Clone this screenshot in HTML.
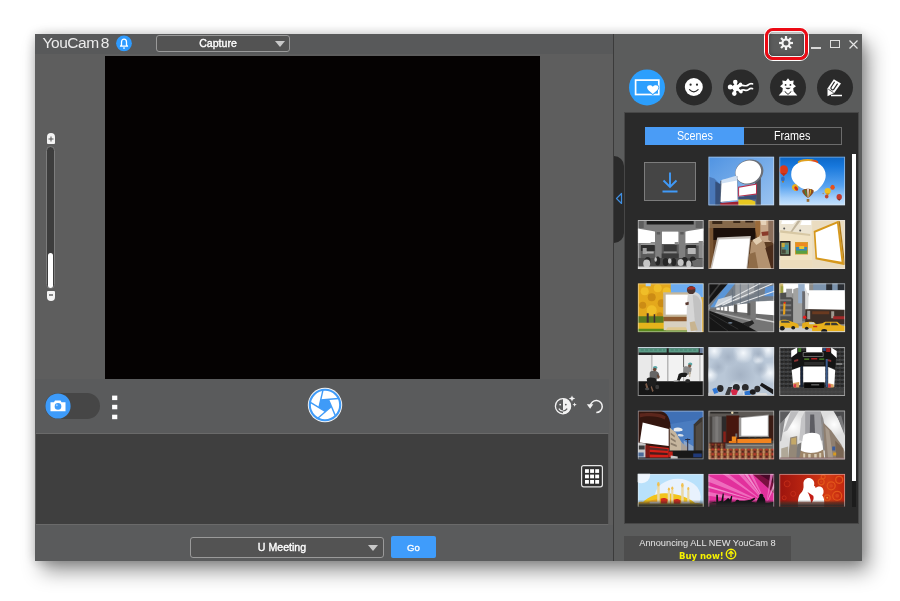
<!DOCTYPE html>
<html>
<head>
<meta charset="utf-8">
<title>YouCam 8</title>
<style>
html,body{margin:0;padding:0;}
body{width:900px;height:601px;background:#fff;position:relative;overflow:hidden;font-family:"Liberation Sans",sans-serif;}
.abs{position:absolute;}
#win{position:absolute;left:35px;top:34px;width:827px;height:527px;background:#5e5e5e;border-radius:2px;
  box-shadow:7px 10px 20px rgba(0,0,0,.42),0 1px 12px rgba(0,0,0,.22);will-change:transform;
  clip-path:none;}
#win>div,#win>svg{position:absolute;}
#titlebar{left:0;top:0;width:578px;height:20px;background:#58595a;}
#title{left:7.500px;top:-1px;font-size:15.5px;color:#ececec;line-height:19px;letter-spacing:-0.45px;word-spacing:-1.800px;white-space:nowrap;}
#video{left:70px;top:22px;width:435px;height:323px;background:#050202;}
.dd{border:1px solid #9a9a9a;border-radius:3px;box-sizing:border-box;color:#fff;font-size:10.600px;-webkit-text-stroke:0.35px #fff;text-align:center;background:#535353;}
#ctrl{left:0;top:345px;width:574px;height:54px;background:#5a5b5c;}
#tray{left:1px;top:399px;width:573px;height:92px;background:#3f3f3f;border-top:1px solid #6a6a6a;border-bottom:1px solid #6a6a6a;border-right:1px solid #585858;box-sizing:border-box;}
#divider{left:578px;top:0;width:1px;height:527px;background:#3b3b3b;}
#right{left:579px;top:0;width:248px;height:527px;background:#5b5c5c;}
#panel{left:589px;top:78px;width:235px;height:412px;background:#2a2a2a;border:1px solid #474747;box-sizing:border-box;}
.th{position:absolute;left:0;top:0;width:66px;height:49px;overflow:hidden;}
.th svg{position:absolute;left:0;top:0;}
.th::after{content:"";position:absolute;left:0;top:0;right:0;bottom:0;border:1px solid rgba(235,235,235,.55);}
.th6::after{border-bottom:none;}
.sx{display:inline-block;transform:scaleX(.86);}
.circ{transform:translateY(0.400px);position:absolute;width:36px;height:36px;border-radius:50%;background:#2a2a2a;top:35px;}
</style>
</head>
<body>
<div id="win">
  <div id="right"></div>
  <div id="titlebar"></div>
  <div id="title">YouCam 8</div>
  <!-- bell -->
  <svg style="left:81px;top:1px;transform:translate(0,-0.200px)" width="17" height="17" viewBox="0 0 17 17">
    <circle cx="8" cy="8.500" r="7.900" fill="#2e9bff"/>
    <path d="M4.500 11.400L5.500 10.200V7.300C5.500 5.400 6.600 4.400 8 4.400C9.400 4.400 10.500 5.400 10.500 7.300V10.200L11.500 11.400Z" fill="none" stroke="#fff" stroke-width="1.300" stroke-linejoin="round"/>
    <rect x="7" y="12.700" width="2" height="1.100" fill="#fff"/>
  </svg>
  <!-- capture dropdown -->
  <div class="dd" style="left:121px;top:1px;width:134px;height:17px;line-height:14px;padding-right:10px;">Capture</div>
  <svg style="left:240px;top:7px" width="10" height="6" viewBox="0 0 10 6"><path d="M0 0H10L5 6Z" fill="#c8c8c8"/></svg>
  <div id="video"></div>
  <!-- zoom slider -->
  <div style="left:12px;top:99px;width:8px;height:11px;background:#f4f4f4;border-radius:4px 4px 1px 1px;"></div>
  <svg style="left:13px;top:102px" width="6" height="6" viewBox="0 0 6 6"><path d="M3 0.5V5.5M0.5 3H5.5" stroke="#555" stroke-width="1"/></svg>
  <div style="left:11px;top:112px;width:9px;height:143px;box-sizing:border-box;border:1px solid #7d7d7d;background:#3d3d3d;border-radius:4.5px;"></div>
  <div style="left:13px;top:219px;width:5px;height:35px;background:#fff;border-radius:2.5px;"></div>
  <div style="left:12px;top:257px;width:8px;height:10px;background:#f4f4f4;border-radius:1px 1px 4px 4px;"></div>
  <div style="left:14px;top:260px;width:4px;height:1.5px;background:#888;"></div>
  <div id="ctrl"></div>
  <!-- camera toggle -->
  <div style="left:10px;top:359px;width:55px;height:26px;border-radius:13px;background:#464646;"></div>
  <svg style="left:10px;top:359px" width="26" height="26" viewBox="0 0 26 26">
    <circle cx="13" cy="13" r="12.6" fill="#3d9bfa"/>
    <path d="M5.5 9.2H9L10 7.6H15.5L16.5 9.2H20.5V18.2H5.5Z" fill="#fff"/>
    <circle cx="13" cy="13.4" r="3.3" fill="#3d9bfa"/>
    <circle cx="11.8" cy="12.3" r="1" fill="#9ccbfb"/>
  </svg>
  <svg style="left:76px;top:360px" width="8" height="28" viewBox="0 0 8 28"><g fill="#fff"><rect x="1.100" y="1.600" width="5.200" height="4.500"/><rect x="1.100" y="10.800" width="5.200" height="4.500"/><rect x="1.100" y="20.700" width="5.200" height="4.500"/></g></svg>
  <!-- shutter -->
  <svg style="left:272px;top:353px" width="36" height="36" viewBox="-18 -18 36 36">
    <circle r="17.2" fill="#f4f4f4"/>
    <circle r="15.2" fill="#fff" stroke="#3f9bf8" stroke-width="2.1"/>
    <g id="shut"><polygon points="6.43,1.48 0.58,6.57 -6.08,2.58 -4.33,-4.98 3.40,-5.66" fill="#3f9bf8"/><path d="M6.43 1.48L-6.91 13.09" stroke="#3f9bf8" stroke-width="1.4"/><path d="M0.58 6.57L-14.58 -2.53" stroke="#3f9bf8" stroke-width="1.4"/><path d="M-6.08 2.58L-2.10 -14.65" stroke="#3f9bf8" stroke-width="1.4"/><path d="M-4.33 -4.98L13.29 -6.52" stroke="#3f9bf8" stroke-width="1.4"/><path d="M3.40 -5.66L10.31 10.62" stroke="#3f9bf8" stroke-width="1.4"/></g>
  </svg>
  <!-- face beautify -->
  <svg style="left:518px;top:360px" width="26" height="24" viewBox="0 0 26 24">
    <circle cx="10" cy="12.2" r="7.6" fill="none" stroke="#f2f2f2" stroke-width="1.3"/>
    <path d="M10 4.4A7.8 7.8 0 0 1 10 20Z" fill="#f2f2f2"/>
    <circle cx="7.2" cy="10.6" r="0.9" fill="#f2f2f2"/>
    <circle cx="12.8" cy="10.6" r="0.9" fill="#5a5b5c"/>
    <path d="M5.8 14.6Q7.5 17 10 17" fill="none" stroke="#f2f2f2" stroke-width="1.1"/>
    <path d="M10 17Q12.6 17 14.2 14.6" fill="none" stroke="#5a5b5c" stroke-width="1.1"/>
    <path d="M19 1.4L19.9 3.6L22.2 4.5L19.9 5.4L19 7.6L18.1 5.4L15.8 4.500L18.1 3.6Z" fill="#f2f2f2"/>
    <path d="M21.6 8.6L22.2 10.100L23.800 10.700L22.2 11.3L21.6 12.8L21 11.3L19.4 10.700L21 10.100Z" fill="#f2f2f2"/>
  </svg>
  <!-- undo -->
  <svg style="left:550px;top:363px" width="20" height="18" viewBox="0 0 20 18">
    <path d="M5.3 8.900A6 6 0 1 1 11.3 15.600" fill="none" stroke="#f2f2f2" stroke-width="1.5"/>
    <path d="M1.800 7.200L8.300 7.200L5.100 11.700Z" fill="#f2f2f2"/>
  </svg>
  <div id="tray"></div>
  <div style="left:0;top:491px;width:578px;height:36px;background:#5a5b5c;"></div>
  <!-- grid icon -->
  <svg style="left:546px;top:431px" width="22" height="23" viewBox="0 0 22 23">
    <rect x="0.600" y="0.600" width="20.800" height="21.200" rx="2" fill="#303030" stroke="#e4e4e4" stroke-width="1.200"/>
    <g fill="#fff"><rect x="4" y="4.200" width="3.900" height="3.700"/><rect x="9.100" y="4.200" width="3.900" height="3.700"/><rect x="14.200" y="4.200" width="3.900" height="3.700"/>
    <rect x="4" y="9.600" width="3.900" height="3.700"/><rect x="9.100" y="9.600" width="3.900" height="3.700"/><rect x="14.200" y="9.600" width="3.900" height="3.700"/>
    <rect x="4" y="15" width="3.900" height="3.700"/><rect x="9.100" y="15" width="3.900" height="3.700"/><rect x="14.200" y="15" width="3.900" height="3.700"/></g>
  </svg>
  <!-- bottom bar -->
  <div class="dd" style="left:155px;top:503px;width:194px;height:21px;line-height:19.500px;padding-right:10px;">U Meeting</div>
  <svg style="left:333px;top:511px" width="10" height="6" viewBox="0 0 10 6"><path d="M0 0H10L5 6Z" fill="#c8c8c8"/></svg>
  <div style="left:356px;top:502px;width:45px;height:22px;background:#3f9cfb;border-radius:2px;color:#fff;font-size:9.600px;-webkit-text-stroke:0.300px #fff;text-align:center;line-height:24px;">Go</div>
  <div id="divider"></div>
  <!-- collapse handle -->
  <div style="left:579px;top:122px;width:10px;height:87px;background:#2a2a2a;border-radius:0 10px 10px 0;"></div>
  <svg style="left:580px;top:158px" width="8" height="13" viewBox="0 0 8 13"><path d="M6.500 1.500V11.500L1.500 6.500Z" fill="none" stroke="#3f8ee0" stroke-width="1.2" stroke-linejoin="round"/></svg>
  <!-- gear -->
  <svg style="left:743px;top:1px" width="16" height="16" viewBox="-8 -8 16 16">
    <g stroke="#f2f2f2" stroke-width="2.2">
      <path d="M0 -7V7"/><path d="M-7 0H7"/><path d="M-4.950 -4.950L4.950 4.950"/><path d="M-4.950 4.950L4.950 -4.950"/>
    </g>
    <circle r="4.600" fill="#f2f2f2"/>
    <circle r="2.500" fill="#555657"/>
  </svg>
  <!-- window buttons -->
  <div style="left:776px;top:13px;width:10px;height:1.5px;background:#d8d8d8;"></div>
  <div style="left:795px;top:6px;width:10px;height:8px;box-sizing:border-box;border:1.3px solid #e0e0e0;"></div>
  <svg style="left:814px;top:6px" width="9" height="9" viewBox="0 0 9 9"><path d="M0.500 0.500L8.500 8.500M8.500 0.500L0.500 8.500" stroke="#e6e6e6" stroke-width="1.2"/></svg>
  <!-- mode circles -->
  <div class="circ" style="left:594px;background:#2c9ffd;"></div>
  <div class="circ" style="left:641px;"></div>
  <div class="circ" style="left:688px;"></div>
  <div class="circ" style="left:735px;"></div>
  <div class="circ" style="left:782px;"></div>
  <svg id="icons" style="left:594px;top:35px;transform:translateY(0.400px)" width="225" height="36" viewBox="0 0 225 36">
    <!-- scenes icon -->
    <rect x="6.600" y="10.700" width="23.200" height="14.400" fill="none" stroke="#fff" stroke-width="1.700"/>
    <path d="M23.800 24.700C20.500 21.900 18.100 20.300 18.100 18.200C18.100 15.500 21.800 14.900 23.800 17.300C25.800 14.900 29.500 15.500 29.500 18.200C29.500 20.300 27.100 21.900 23.800 24.700Z" fill="#fff" stroke="#2c9ffd" stroke-width="1.500" paint-order="stroke"/>
    <!-- smiley -->
    <circle cx="64.800" cy="17.600" r="9" fill="#fff"/>
    <circle cx="61.600" cy="15.300" r="1.100" fill="#2a2a2a"/><circle cx="68" cy="15.300" r="1.100" fill="#2a2a2a"/>
    <path d="M60.500 20.200Q64.800 24.600 69.100 20.200" fill="none" stroke="#2a2a2a" stroke-width="1.200" stroke-linecap="round"/>
    <!-- splash -->
    <g fill="#fff"><circle cx="106.800" cy="18.300" r="3.300"/><circle cx="106.300" cy="12.700" r="2.300"/><circle cx="101.300" cy="17.700" r="2.500"/><circle cx="105.300" cy="24.200" r="2.300"/><circle cx="112" cy="22.300" r="1.800"/><circle cx="111.500" cy="14.800" r="1.700"/>
    <path d="M106.300 12.700L106.800 18.300L101.300 17.700M105.300 24.200L106.800 18.300L112 22.300M106.800 18.300L111.500 14.800" stroke="#fff" stroke-width="2.600" fill="none"/></g>
    <path d="M110.500 17.200C113.500 14 116 18 119 15.600S122.500 14.600 123.500 14.400" fill="none" stroke="#fff" stroke-width="1.700" stroke-linecap="round"/>
    <path d="M111.500 21.600C114.500 18.600 116.500 22.600 119.500 20.200S122.500 19.400 123.500 19.200" fill="none" stroke="#fff" stroke-width="1.700" stroke-linecap="round"/>
    <!-- avatar -->
    <polygon points="159.0,8.8 161.1,11.6 164.7,11.1 164.2,14.7 167.0,16.8 164.2,18.9 164.7,22.5 161.1,22.0 159.0,24.8 156.9,22.0 153.3,22.5 153.8,18.9 151.0,16.8 153.8,14.7 153.3,11.1 156.9,11.6" fill="#fff"/>
    <path d="M153.300 22.200H164.700L168.300 26.200H149.700Z" fill="#fff"/>
    <path d="M155.800 22.200L159 25L162.200 22.200" fill="none" stroke="#2a2a2a" stroke-width="1"/>
    <circle cx="156.600" cy="15.500" r="0.900" fill="#2a2a2a"/><circle cx="161.400" cy="15.500" r="0.900" fill="#2a2a2a"/>
    <path d="M156.300 18.300Q159 21.300 161.700 18.300Z" fill="#2a2a2a"/>
    <!-- pencil -->
    <path d="M204.800 9.900L212 14L205.200 23.700L198.500 26.900L198.500 19.200Z" fill="#fff"/>
    <path d="M205.600 12.400L202 18C201.400 19.600 203.200 21 204.600 20.200L208.600 14.300" fill="none" stroke="#2a2a2a" stroke-width="1.200"/>
    <path d="M199.300 19.800L204.600 23.300" stroke="#2a2a2a" stroke-width="0.800"/>
    <path d="M202 26.100H213" stroke="#fff" stroke-width="1.600"/>
  </svg>
  <div id="panel"></div>
  <!-- tabs -->
  <div style="left:610px;top:93px;width:99px;height:18px;background:#4a9cf6;color:#fff;font-size:12.500px;line-height:19px;text-align:center;"><span class="sx">Scenes</span></div>
  <div style="left:709px;top:93px;width:98px;height:18px;box-sizing:border-box;border:1px solid #6c6c6c;border-left:none;color:#fff;font-size:12.500px;line-height:17px;text-align:center;"><span class="sx">Frames</span></div>
  <!-- download tile -->
  <div style="left:609px;top:128px;width:52px;height:39px;box-sizing:border-box;border:1px solid #7c7c7c;background:#454545;"></div>
  <svg style="left:624px;top:137px" width="22" height="22" viewBox="0 0 22 22"><path d="M11 1.500V15.500M4.500 9.500L11 16L17.500 9.500M3.500 20.500H18.500" fill="none" stroke="#409af8" stroke-width="1.900"/></svg>
  <svg id="thumbs" style="left:0;top:0" width="0" height="0"><defs><linearGradient id="fade6" x1="0" y1="0" x2="0" y2="1"><stop offset="0" stop-color="#2a2a2a" stop-opacity="0"/><stop offset="0.800" stop-color="#2a2a2a" stop-opacity="1"/><stop offset="1" stop-color="#2a2a2a" stop-opacity="1"/></linearGradient></defs></svg>
<!--THUMBS-->
<div class="th" style="transform:translate(673.3px,122.5px);height:49px;"><svg width="66" height="49" viewBox="0 0 66 49"><defs><linearGradient id="g12" x1="0" y1="0" x2="1" y2="1"><stop offset="0" stop-color="#4f93e2"/><stop offset="1" stop-color="#9cc4f0"/></linearGradient></defs>
<rect width="66" height="49" fill="url(#g12)"/>
<path d="M0 20L6 22L10 26V49H0Z" fill="#4a78b8"/>
<path d="M7 25L13 28V49H7Z" fill="#35507c"/>
<path d="M47 14H52.5V49H46Z" fill="#4a4e58"/>
<path d="M36 30H48V49H36Z" fill="#5d6f8c"/>
<ellipse cx="41" cy="15.5" rx="14.3" ry="12.3" fill="#6c7078" transform="rotate(-20 41 15.5)"/>
<ellipse cx="40" cy="15.5" rx="13" ry="11.3" fill="#fff" transform="rotate(-20 40 15.5)"/>
<path d="M12 24.5L29 19.5L29.5 43L11.5 46Z" fill="#50607a"/>
<path d="M13.3 23.5L28.8 21.5L29.3 43.5L12.3 45.5Z" fill="#fff"/>
<path d="M13.5 23.4L28.5 19L28.8 24L13.4 27Z" fill="#cfe0f4"/>
<path d="M29.8 30.2L48.7 27V38L29.8 40.3Z" fill="#b8304c"/>
<path d="M30.8 31.2L47.7 28.3V37L30.8 39.2Z" fill="#fff"/>
<path d="M30 43L38 41.5L47 45V49H30Z" fill="#e8c820"/>
<path d="M12 46.5L30 45V49H12Z" fill="#a02030"/>
<path d="M30 40.5L48 38.5V43L30 43Z" fill="#3c5078"/></svg></div>
<div class="th" style="transform:translate(744.2px,122.5px);height:49px;"><svg width="66" height="49" viewBox="0 0 66 49"><defs><linearGradient id="g13" x1="0" y1="0" x2="0" y2="1"><stop offset="0" stop-color="#0b66c6"/><stop offset="0.2" stop-color="#1878dc"/><stop offset="0.6" stop-color="#56a2f0"/><stop offset="0.85" stop-color="#a6d0fa"/><stop offset="1" stop-color="#c6e2fc"/></linearGradient></defs>
<rect width="66" height="49" fill="url(#g13)"/>
<ellipse cx="28.5" cy="5.5" rx="10" ry="3" fill="#e0a020"/>
<ellipse cx="35" cy="6" rx="4" ry="2.5" fill="#e04818"/>
<path d="M12 18C12 9 19 4.5 29 4.5C39 4.5 46.5 10 46.5 19C46.5 25 42 30 38.5 33.5C36 36 33 35.5 29 34C24 32.5 12 28 12 18Z" fill="#fff"/>
<ellipse cx="4.5" cy="13.5" rx="4.3" ry="4.8" fill="#d83a1c"/><path d="M1.8 16.5L4.5 20L7.2 16.5Z" fill="#c03018"/>
<ellipse cx="3.7" cy="22.5" rx="1.9" ry="2.2" fill="#2f6cc0"/><rect x="3" y="24.5" width="1.6" height="1.5" fill="#b07820"/>
<ellipse cx="16" cy="31" rx="3" ry="3.4" fill="#e8b020" transform="rotate(-35 16 31)"/><ellipse cx="17" cy="32" rx="1.5" ry="2.5" fill="#d03018" transform="rotate(-35 17 32)"/>
<path d="M23 34.5C23 31.5 34.5 31.5 34.5 34.5C34.5 37 30.5 40.5 28.8 41.5C27 40.5 23 37 23 34.5Z" fill="#8a4a20"/>
<path d="M25.5 33C27 32.5 27.5 38 28.3 41C27 39 25 36 25.5 33Z" fill="#3c8a3c"/><path d="M28 32.5H29.6L29.2 41H28.5Z" fill="#f0f0f0"/><path d="M31 32.8C33 33 31.5 38 29.5 41C30.5 38 30.5 35 31 32.8Z" fill="#d8b020"/>
<rect x="27.5" y="42.5" width="2.6" height="2.8" fill="#9a6a30"/>
<ellipse cx="48.5" cy="34.5" rx="3.1" ry="3" fill="#ecc020"/><path d="M46.5 36.5L48.5 39.5L50.5 36.5Z" fill="#d8a020"/>
<ellipse cx="53.4" cy="30.8" rx="2.2" ry="2.5" fill="#e85018"/>
<ellipse cx="47.5" cy="40" rx="1.8" ry="2" fill="#c04a30"/>
<ellipse cx="60" cy="40.5" rx="2.7" ry="2.9" fill="#c03a30"/><path d="M58.5 42.5L60 44.5L61.5 42.5Z" fill="#803028"/>
<circle cx="44" cy="37" r="0.8" fill="#a89070"/></svg></div>
<div class="th" style="transform:translate(602.7px,186px);height:49px;"><svg width="66" height="49" viewBox="0 0 66 49"><rect width="66" height="49" fill="#5a5a5a"/>
<rect x="0" y="0" width="66" height="11" fill="#7c7c7c"/>
<path d="M9 1H56V4.5H9Z" fill="#1c1c1c"/>
<path d="M0 1H6V8H0Z" fill="#5e5e5e"/><path d="M58 1H66V8H58Z" fill="#606060"/>
<path d="M0 8.5L17.5 11.5V23.5L0 23Z" fill="#fff"/>
<path d="M24 11.5H41V24H24Z" fill="#fff"/>
<path d="M47.5 11.5L66 8.5V22.5L47.5 23.5Z" fill="#fff"/>
<rect x="17.5" y="10.5" width="6.5" height="32" fill="#7f7f7f"/><rect x="41" y="10.5" width="6.5" height="32" fill="#7f7f7f"/>
<rect x="19" y="12" width="3.5" height="2.5" fill="#5c5c5c"/><rect x="42.5" y="12" width="3.5" height="2.5" fill="#5c5c5c"/>
<rect x="13" y="22" width="4.5" height="2.5" fill="#8c8c8c"/><rect x="37" y="22" width="4" height="2.5" fill="#8c8c8c"/>
<rect x="0" y="23.5" width="17.5" height="2" fill="#9a9a9a"/><rect x="47.5" y="23.5" width="18.5" height="2" fill="#8a8a8a"/>
<rect x="3" y="25" width="14" height="6" fill="#2e2e2e"/><rect x="26" y="25" width="13" height="6.5" fill="#3a3a3a"/><rect x="48.5" y="25" width="10" height="4" fill="#2a2a2a"/>
<rect x="26" y="31.5" width="13" height="2" fill="#8a8a8a"/>
<rect x="50" y="28" width="8" height="6" fill="#b8b8b8"/><rect x="5" y="28" width="4" height="6" fill="#a0a0a0"/><rect x="8" y="31.5" width="8" height="2" fill="#b0b0b0"/>
<rect x="61" y="21" width="5" height="20" fill="#8a8a8a"/>
<rect x="0" y="24" width="3" height="20" fill="#787878"/>
<rect x="24" y="33.5" width="17" height="9" fill="#3c3c3c"/>
<path d="M0 38H66V49H0Z" fill="#4a4a4a"/>
<g fill="#262626"><ellipse cx="10" cy="41" rx="3" ry="4"/><ellipse cx="20" cy="41" rx="2.5" ry="4.5"/><ellipse cx="28" cy="42" rx="3" ry="4"/><ellipse cx="36" cy="42" rx="2.5" ry="4"/><ellipse cx="47" cy="41" rx="3" ry="4"/><ellipse cx="55" cy="40" rx="3" ry="3.5"/></g>
<g fill="#c4c4c4"><ellipse cx="9" cy="43.5" rx="3.5" ry="4"/><ellipse cx="43" cy="42.5" rx="3" ry="3.5"/><ellipse cx="51" cy="44" rx="2.5" ry="3.5"/><ellipse cx="60" cy="43" rx="3" ry="3.5"/><ellipse cx="32" cy="41" rx="1.8" ry="2.8"/><ellipse cx="18" cy="39.5" rx="1.2" ry="2.2"/></g>
<path d="M0 46.5H66V49H0Z" fill="#d4d4d4"/>
<path d="M54 41L66 38V47H56Z" fill="#6a6a6a"/></svg></div>
<div class="th" style="transform:translate(673.3px,186px);height:49px;"><svg width="66" height="49" viewBox="0 0 66 49"><rect width="66" height="49" fill="#5c3c22"/>
<rect x="0" y="0" width="48" height="8" fill="#86694a"/>
<rect x="4" y="1" width="10" height="3" fill="#3a2818"/><rect x="25" y="0.5" width="7" height="2.5" fill="#3a2818"/><rect x="37" y="0.5" width="8" height="2" fill="#2a1a10"/>
<path d="M4 8H47V20H4Z" fill="#1c100a"/>
<path d="M0 8H5V49H0Z" fill="#7a5634"/>
<path d="M47 0H66V22H50Z" fill="#c8a88a"/>
<path d="M47 0H52V14L49 20L47 10Z" fill="#9a6a3a"/>
<path d="M52 0H58V5H53Z" fill="#e6d2b8"/>
<path d="M53 12L62 11L63 15L54 16Z" fill="#8a3a2a"/>
<path d="M60 0H66V24L60 20Z" fill="#8a6e5a"/>
<path d="M43 22L50 17L56 22L60 35L64 46V49H40L42 30Z" fill="#b39270"/>
<path d="M44 20L51 16.5L54 21L48 25Z" fill="#e2cdb0"/>
<path d="M57 28L66 24V49H63Z" fill="#4a2c1a"/>
<path d="M41 34L47 32L50 49H40Z" fill="#8f6c48"/>
<path d="M9 17.5L42.5 16L39 49H2Z" fill="#c8c2bc"/>
<path d="M10.5 19.5L41.5 18.5L38 49H3.5Z" fill="#fff"/></svg></div>
<div class="th" style="transform:translate(744.2px,186px);height:49px;"><svg width="66" height="49" viewBox="0 0 66 49"><rect width="66" height="49" fill="#f1e3c4"/>
<path d="M0 0H33V10L30 16L0 12Z" fill="#ece4d2"/>
<path d="M3 0H18L14 4H2Z" fill="#fff"/><path d="M23 0H32V5H21Z" fill="#fff"/>
<path d="M19 0H22L13 12H11Z" fill="#c0b49c"/>
<path d="M0 10L31 14V16L0 12.5Z" fill="#d8c8a4"/>
<path d="M33 0H66V49H33Z" fill="#eadcc0"/>
<path d="M0 40H33V49H0Z" fill="#ecdcbc"/>
<circle cx="5" cy="8.5" r="1" fill="#555"/><circle cx="21" cy="10.5" r="1" fill="#555"/>
<rect x="0.5" y="21" width="10.8" height="14.8" fill="#2a2018"/>
<rect x="2" y="22.5" width="7.8" height="11.8" fill="#6a8a70"/><rect x="5" y="25" width="4" height="5" fill="#3a90a8"/><rect x="2.5" y="23" width="3" height="4" fill="#c8a838"/><rect x="2.5" y="29.5" width="4" height="4" fill="#4a4a3a"/>
<rect x="15.8" y="22" width="13" height="12.5" fill="#d8a030"/>
<rect x="16.6" y="22.8" width="11.4" height="4.5" fill="#ec8a20"/><rect x="16.6" y="27" width="11.4" height="4" fill="#3a8ab8"/><rect x="16.6" y="30.5" width="11.4" height="3.3" fill="#5aa040"/><rect x="20" y="26" width="5" height="3" fill="#e8c830"/>
<path d="M34.5 11L59.3 0.8L64.8 45L36.3 39.3Z" fill="#d6981c"/>
<path d="M36.3 12.4L57.8 3.5L62.3 41.8L37.8 37.6Z" fill="#fff"/>
<path d="M59.3 0.8L60.8 1.5L66 44.5L64.8 45Z" fill="#b07a14"/></svg></div>
<div class="th" style="transform:translate(602.7px,249.3px);height:49px;"><svg width="66" height="49" viewBox="0 0 66 49"><rect width="66" height="49" fill="#e4a81c"/>
<path d="M33 0H66V14H33Z" fill="#6cacf0"/>
<path d="M8 0H13V3H8Z" fill="#a8d0f4"/>
<g fill="#f0be28"><circle cx="7" cy="8" r="4"/><circle cx="20" cy="5" r="4"/><circle cx="14" cy="27" r="5"/><circle cx="29" cy="8" r="4"/></g>
<g fill="#cc8c14"><circle cx="14" cy="14" r="4"/><circle cx="24" cy="20" r="4"/><circle cx="5" cy="22" r="3.5"/><circle cx="22" cy="32" r="3"/></g>
<path d="M0 33H26V40H0Z" fill="#5a7a20"/>
<path d="M9 30H11V40H9ZM16 31H17.5V40H16Z" fill="#3c2c34"/>
<path d="M0 39.5H28V46H0Z" fill="#e4b41c"/>
<path d="M0 45.5H50V49H0Z" fill="#5c8a1c"/>
<path d="M26 33H50V39H26Z" fill="#8c5a30"/>
<path d="M26 38H50V47H26Z" fill="#d8d0c0"/>
<path d="M30 44L48 44L50 47L28 47Z" fill="#e0c890"/>
<rect x="25.5" y="9" width="26" height="24.5" fill="#c4b69c"/>
<rect x="28" y="11.3" width="22.5" height="20" fill="#fff"/>
<path d="M50 12C51 9 55 8 58 9C62 10 64.5 14 64.5 20V49H49.5C48.5 40 49 20 50 12Z" fill="#d6d6d6"/>
<path d="M55 12C58 11 63 14 63.5 22V49H58Z" fill="#c2c2c2"/>
<ellipse cx="53.5" cy="6.8" rx="4.3" ry="4" fill="#4a3430"/>
<path d="M49.2 6C50 2.5 57 2 57.8 5.5L54 6.5Z" fill="#a03028"/>
<path d="M47.5 19.5L51 18.5L51 21.5L48 22Z" fill="#5a3a30"/>
<path d="M52 39L57 38L60 47L53 48Z" fill="#c8b490"/></svg></div>
<div class="th" style="transform:translate(673.3px,249.3px);height:49px;"><svg width="66" height="49" viewBox="0 0 66 49"><rect width="66" height="49" fill="#8c9298"/>
<path d="M20 0L66 0V16L30 22L2 26L0 22Z" fill="#757d86"/>
<path d="M19 0H27L8 24H2Z" fill="#5a96d8"/>
<path d="M57 4L66 2V13L56 13Z" fill="#5c92d2"/>
<path d="M27 0H46V10L27 18Z" fill="#9a9ea2"/>
<path d="M10 16L24 12L24 18L6 24Z" fill="#c8d0d8"/>
<g stroke="#e8eaec" stroke-width="1.1" fill="none"><path d="M14 22L64 0.5"/><path d="M20 24L66 8"/><path d="M28 25L66 18"/><path d="M8 23L52 0"/></g>
<g stroke="#5c6a78" stroke-width="0.6" fill="none"><path d="M32 0V22"/><path d="M40 0V21"/><path d="M50 0V19"/><path d="M24 6V23"/></g>
<path d="M0 0H20L0 22Z" fill="#151515"/>
<path d="M11 0H13L0 17V14Z" fill="#3c3c3c"/>
<path d="M0 26L66 17V49H0Z" fill="#6e6e6e"/>
<path d="M42 18H47.5V39H42Z" fill="#7a7a7a"/><path d="M25.5 21H29V30H25.5Z" fill="#5c5c5c"/><path d="M39 20H42V32H39Z" fill="#565656"/>
<path d="M47.5 18.3L66 17.5V32L47.5 30.5Z" fill="#fff"/>
<path d="M29 21.2L39 20.3V29.8L29 28.8Z" fill="#fff"/>
<path d="M20.5 22.8L25.5 22.4V28.6L20.5 28Z" fill="#fff"/>
<path d="M16 23.5L19 23.3V27.8L16 27.4Z" fill="#fff"/>
<path d="M12.5 24L15 23.8V27.2L12.5 26.9Z" fill="#fff"/>
<path d="M8 24.5L11.5 24.3V26.7L8 26.5Z" fill="#f4f4f4"/>
<path d="M3 26.5L44 35L66 38.5V49H46L2 28.5Z" fill="#757575"/>
<path d="M8 28.5L43 36.5L42 38L6 29Z" fill="#a8a8a8"/>
<path d="M47 36L66 39.5V38L48 34.5Z" fill="#cfcfcf"/>
<path d="M0 27L34 40L50 49H0Z" fill="#161616"/>
<path d="M34 40L44 37L46 40L40 44Z" fill="#252525"/>
<path d="M2 30L30 46" stroke="#3c3c3c" stroke-width="0.7"/><path d="M1 34L20 48" stroke="#383838" stroke-width="0.7"/>
<ellipse cx="22" cy="39.5" rx="2.2" ry="0.9" fill="#6a7a8c"/></svg></div>
<div class="th" style="transform:translate(744.2px,249.3px);height:49px;"><svg width="66" height="49" viewBox="0 0 66 49"><rect width="66" height="49" fill="#8c8c8a"/>
<path d="M2 0H30V10H2Z" fill="#fff"/>
<path d="M0 0H4V12H0Z" fill="#c8b060"/><path d="M1.5 3H4V10H1.5Z" fill="#9aa040"/>
<path d="M0 10L8 9L14 16V40H0Z" fill="#4e4e4e"/>
<path d="M1 16H12V18H1ZM1 21H12V23H1ZM1 26H12V28H1ZM1 31H12V33H1Z" fill="#7a7a7a"/>
<path d="M7 5.5H13V14H7Z" fill="#9a9a9a"/>
<path d="M14 6L18 4.5L23 6V40H14Z" fill="#a2a2a0"/>
<path d="M19 0H25.5V20H19Z" fill="#98b0cc"/>
<path d="M23 8H26V38H23Z" fill="#6c6c70"/>
<path d="M26 4L30 14V30H26Z" fill="#dcdcdc"/>
<path d="M4.3 19.5L6.3 19L6 31L3.8 31.5Z" fill="#e8a018"/><circle cx="5.5" cy="19.5" r="1" fill="#e02020"/>
<path d="M34 0H66V7.5H34Z" fill="#7c94ae"/><path d="M47 0H53V7H47ZM58.5 0H66V7H58.5Z" fill="#2a2e34"/>
<path d="M26 26H66V41H26Z" fill="#3c2e26"/>
<path d="M28 27.5H31V36H28Z" fill="#9a9a96"/><path d="M33 28H50V31H33Z" fill="#6a3a20"/><path d="M52 28H55V35H52Z" fill="#a09a90"/><path d="M54 33H66V36H54Z" fill="#a02828"/>
<path d="M29.5 7L65.5 7L66 26.5L29 25.8Z" fill="#fff"/>
<circle cx="25.5" cy="34" r="1.7" fill="#e61c1c"/>
<path d="M0 43H66V49H0Z" fill="#cacaca"/>
<path d="M0 38C1 36 8 36 10 37.5L17 40C19 40.5 20 42 19.5 44.5H0Z" fill="#e6ae1c"/>
<path d="M2 37.5H9L11 39.5H2Z" fill="#4a4a40"/>
<ellipse cx="3" cy="45" rx="2.5" ry="2.2" fill="#1c1c1c"/><ellipse cx="14" cy="44.5" rx="2" ry="1.8" fill="#1c1c1c"/>
<path d="M23 40.5C24 38.5 33 38 35 39L38 42V45H23Z" fill="#e4ac1c"/><path d="M30 39H34.5L36 41H30Z" fill="#c8d4dc"/>
<ellipse cx="27.5" cy="45" rx="1.8" ry="1.5" fill="#1c1c1c"/>
<path d="M32.5 44C33 41 40 40.5 43 40L46 38.5H58L62 42L66 43V48H33Z" fill="#e8b01c"/>
<path d="M46.5 39.5H51V42H45ZM52 39.5H57L59.5 42H52Z" fill="#3a3a34"/>
<ellipse cx="45" cy="48" rx="3" ry="2.2" fill="#1a1a1a"/>
<path d="M34 42.5H38V44H34Z" fill="#c82a1c"/></svg></div>
<div class="th" style="transform:translate(602.7px,313px);height:49px;"><svg width="66" height="49" viewBox="0 0 66 49"><rect width="66" height="49" fill="#f2f2f2"/>
<rect x="0" y="0" width="66" height="8" fill="#242424"/>
<rect x="0" y="0" width="66" height="1.2" fill="#9ab4c8"/>
<rect x="1" y="1.2" width="28" height="4.3" fill="#5c9c88"/><rect x="31" y="1.2" width="30" height="4.3" fill="#5c9c88"/>
<path d="M3 3H27M33 3H59" stroke="#3e7a68" stroke-width="1.2" stroke-dasharray="3 1.5"/>
<rect x="62" y="1" width="4" height="5" fill="#6a80a0"/>
<g fill="#a8a8a8"><rect x="13.5" y="8" width="1.2" height="27"/><rect x="29.5" y="8" width="1.2" height="27"/><rect x="45.5" y="8" width="1.2" height="27"/><rect x="61.5" y="8" width="1.2" height="27"/></g>
<rect x="0" y="8" width="13.5" height="27" fill="#e9e9e9"/><rect x="46.7" y="8" width="15" height="27" fill="#ececec"/>
<rect x="0" y="34.5" width="66" height="14.5" fill="#161616"/>
<rect x="0" y="34" width="66" height="1" fill="#4a4a4a"/>
<!-- left climber -->
<path d="M12 26C12 23 19 23 21 26L22 30L18 33L12 32Z" fill="#666"/>
<path d="M9 32C10 30 18 30 19 33L18 39L14 40L10 38Z" fill="#1e1e1e"/>
<ellipse cx="17.5" cy="20.5" rx="2.3" ry="1.6" fill="#5aa8a8"/><ellipse cx="17" cy="22.5" rx="1.8" ry="1.8" fill="#6a4a3a"/>
<path d="M9 36L11 42L9 43L7.5 37ZM14 39L16 44L14.5 45L13 40Z" fill="#7a5a48"/>
<ellipse cx="9.5" cy="42" rx="2.2" ry="1.2" fill="#4a4a4a"/><ellipse cx="19.5" cy="40" rx="2" ry="2.2" fill="#3a3a3a"/>
<path d="M20 27L22 30L21 32L19 29Z" fill="#6a4a3a"/>
<!-- right climber -->
<path d="M46 20C47 18.5 53 19.5 54 21.5L53 27L48 28L45.5 25Z" fill="#8a8a8a"/>
<path d="M41 27C43 25.5 49 25 50 27L48 30L44 30L41 35L39 34Z" fill="#1c1c1c"/>
<ellipse cx="52.5" cy="17" rx="2.2" ry="1.5" fill="#5aa8a8"/><ellipse cx="52" cy="18.8" rx="1.7" ry="1.6" fill="#7a5a48"/>
<path d="M53 25L52.5 30L51.5 30L51.5 25Z" fill="#c8b8a0"/>
<path d="M36 33.5L41 33L41 34.5L36 34.5Z" fill="#b0b0b0"/>
<rect x="45.5" y="8" width="0.8" height="12" fill="#555"/>
<ellipse cx="50" cy="34" rx="2.5" ry="2" fill="#2a2a2a"/></svg></div>
<div class="th" style="transform:translate(673.3px,313px);height:49px;"><svg width="66" height="49" viewBox="0 0 66 49"><rect width="66" height="49" fill="#b9c7d7"/>
<defs><radialGradient id="w42"><stop offset="0" stop-color="#f4f8fc"/><stop offset="1" stop-color="#f4f8fc" stop-opacity="0"/></radialGradient>
<radialGradient id="d42"><stop offset="0" stop-color="#a4b2c4"/><stop offset="1" stop-color="#a4b2c4" stop-opacity="0"/></radialGradient></defs>
<circle cx="6" cy="4" r="9" fill="url(#w42)"/><circle cx="35" cy="6" r="11" fill="url(#w42)"/><circle cx="60" cy="3" r="9" fill="url(#w42)"/><circle cx="62" cy="26" r="11" fill="url(#w42)"/><circle cx="2" cy="28" r="8" fill="url(#w42)"/><circle cx="29" cy="40" r="8" fill="url(#w42)"/><circle cx="50" cy="12" r="6" fill="url(#w42)"/>
<circle cx="20" cy="10" r="10" fill="url(#d42)"/><circle cx="50" cy="7" r="8" fill="url(#d42)"/><circle cx="32" cy="28" r="16" fill="url(#d42)"/><circle cx="10" cy="20" r="8" fill="url(#d42)"/><circle cx="52" cy="22" r="8" fill="url(#d42)"/>
<path d="M0 46L8 43L9 46L0 49Z" fill="#c8c8c8"/>
<ellipse cx="12" cy="41.5" rx="3.2" ry="3.4" fill="#2a2a2c"/>
<path d="M4 42L8 40.5L10 45.5L6 47Z" fill="#2f78d8"/>
<path d="M17 47L20 40L24 40L21 49H17Z" fill="#3a3a3c"/>
<ellipse cx="28" cy="40.5" rx="3.5" ry="3.6" fill="#262628"/>
<path d="M22.5 44C23 41.5 29 41.5 29.5 44.5L28 48H24Z" fill="#d42848"/>
<ellipse cx="37" cy="40.5" rx="3.4" ry="3.6" fill="#2a2a2c"/>
<path d="M35 43.5H40L41 48H35Z" fill="#e4e4e4"/>
<path d="M36 44.5L41.5 43.5L42.5 48.5H36.5Z" fill="#2c74d0"/>
<ellipse cx="44.5" cy="45" rx="3" ry="2.8" fill="#1c1c1e"/>
<ellipse cx="49" cy="42" rx="3" ry="3.2" fill="#2e2e30"/>
<path d="M48 46H58L60 49H48Z" fill="#d8d8d8"/>
<path d="M51.5 38.5L53.5 35.8L65 42.5V47.5Z" fill="#19191b"/>
<path d="M0 48H66V49H0Z" fill="#8a8a8a"/></svg></div>
<div class="th" style="transform:translate(744.2px,313px);height:49px;"><svg width="66" height="49" viewBox="0 0 66 49"><rect width="66" height="49" fill="#2e2e2e"/>
<defs><pattern id="n43" width="4" height="4" patternUnits="userSpaceOnUse"><rect width="4" height="4" fill="#303030"/><rect x="0" y="0" width="1.5" height="1.5" fill="#4e4e4e"/><rect x="2" y="2" width="1.5" height="1.5" fill="#1e1e1e"/><rect x="2.5" y="0.5" width="1" height="1" fill="#5a6470"/></pattern></defs>
<rect width="66" height="49" fill="url(#n43)"/>
<path d="M12 9L19 4H51L57 9L56 22L50 20H20L13 23Z" fill="#141414"/>
<path d="M27 0H43V5H27Z" fill="#fff"/>
<path d="M12 3.5L18 0.5V6L12 10.5Z" fill="#fff"/>
<path d="M52 0.5L57.5 4V11L52 6Z" fill="#fff"/>
<path d="M19 1H22V5H19Z" fill="#3c7a28"/><path d="M47 1H51V5H47Z" fill="#a02020"/><path d="M44 1H46.5V4H44Z" fill="#2a4a8a"/>
<path d="M24 5.5H44V9.5H24Z" fill="none" stroke="#8a8a8a" stroke-width="0.7"/>
<path d="M25 11.5H30V12.8H25Z" fill="#5a9a28"/><path d="M32 11H38V12.5H32Z" fill="#b02020"/><path d="M40 11.5H45V12.8H40Z" fill="#4a8a28"/>
<path d="M25 15H45V18H25Z" fill="#2c2c2c"/>
<path d="M15 13L19 12V14L15 15Z" fill="#8a3030"/><path d="M48 12L52 13V15L48 14Z" fill="#8a3030"/>
<path d="M21.5 19H23.5V40H21.5Z" fill="#18243a"/><path d="M46.5 12H48.5V40H46.5Z" fill="#3a5a8a"/>
<path d="M24 19.5H46V35.5H24Z" fill="#fff"/>
<path d="M12.5 23L21 20V38L14 39.5Z" fill="#fff"/>
<path d="M49 20L56 23L55 40L49 38Z" fill="#fff"/>
<path d="M25 35.5H45V41H25Z" fill="#0a0a0a"/><path d="M32 37H40V38.5H32Z" fill="#5a5a5a"/>
<path d="M14 36L20 35V40.5L14.5 40.5Z" fill="#d8a060"/><path d="M14 37.5L17 37V40.5H14.5Z" fill="#d83a4a"/>
<path d="M49 36L54.5 37.5V40.5H49Z" fill="#d8a060"/><path d="M49 37L51.5 37.5V40.5H49Z" fill="#d83a4a"/>
<path d="M0 41.5H66V49H0Z" fill="#484848" opacity="0.7"/>
<path d="M57 16H63V18H57Z" fill="#7a7a7a"/></svg></div>
<div class="th" style="transform:translate(602.7px,376.5px);height:49px;"><svg width="66" height="49" viewBox="0 0 66 49"><rect width="66" height="49" fill="#3f70b6"/>
<path d="M30 14L66 8V40H30Z" fill="#4a7cc0"/>
<path d="M36 18C40 16 45 17.5 45 19.5C45 21 38 21.5 36 20.5Z" fill="#e8ecf0"/>
<path d="M40 24C43 23 46 24 46 25.5C44 26.5 41 26 40 25Z" fill="#d8e0ea"/>
<path d="M46 30L56 36V42H46Z" fill="#8aa4c8"/>
<path d="M0 0H22C30 2 33 8 33 20V40H0Z" fill="#34160f"/>
<path d="M2 3C10 2 24 2 28 6L27 9C20 5 8 5 2 7Z" fill="#5c261c"/>
<path d="M5 12L31 18.5V35.5L2 32Z" fill="#fff"/>
<path d="M32 17L38 22L44 32V42H32Z" fill="#c6b69e"/>
<path d="M33 22L37 25V27L33 24ZM33 27L38 30V32L33 29ZM33 32L39 34.5V36.5L33 34Z" fill="#8c7e6c"/>
<path d="M44 32L50 37V42H44Z" fill="#a8a098"/>
<path d="M56 14L62 8L66 6V46H56Z" fill="#3a3632"/>
<path d="M58 16L64 11V40H58Z" fill="#514b44"/>
<path d="M49.5 28H50.5V41H49.5Z" fill="#2a2a3a"/><path d="M47.5 28.5H52.5V29.5H47.5Z" fill="#2a2a3a"/>
<path d="M0 32L8 33V47H0Z" fill="#c8c8c8"/><path d="M1 35H7V39H1Z" fill="#3a3a3a"/><path d="M0 42H6V46H0Z" fill="#4a6a9a"/>
<path d="M30 40H66V49H30Z" fill="#181818"/>
<path d="M8 35L31 37.5V47.5H8Z" fill="#d62018"/>
<path d="M9.5 36.5L30 38.5V40.5L9.5 39Z" fill="#5a2a28"/><path d="M12 41.5L30 42.5V44.5L12 44Z" fill="#4a1c1c"/>
<path d="M8 35L12 35.5V47.5H8Z" fill="#7a1a14"/>
<path d="M31 41H35V47H31Z" fill="#c02018"/>
<path d="M55.5 43H64V47H55.5Z" fill="#203a7a"/>
<path d="M0 47H66V49H0Z" fill="#222"/>
<path d="M33 45L40 46V48H33Z" fill="#c8c8c8"/></svg></div>
<div class="th" style="transform:translate(673.3px,376.5px);height:49px;"><svg width="66" height="49" viewBox="0 0 66 49"><rect width="66" height="49" fill="#45413e"/>
<path d="M0 0H66V6H0Z" fill="#5c5854"/>
<path d="M2 1L30 1.5V3H2Z" fill="#2a2826"/>
<circle cx="24" cy="2.2" r="1.2" fill="#e8d8b0"/>
<path d="M4 6H13.5V33H4Z" fill="#6c6a68"/><path d="M7 6H10V33H7Z" fill="#7c7a78"/>
<path d="M13.5 6H18V33H13.5Z" fill="#2c2a2a"/>
<path d="M18 5H31V33H18Z" fill="#47170e"/>
<path d="M15 21H17.5V32H15Z" fill="#8a2018"/>
<path d="M60 5H66V30H60Z" fill="#3a1c14"/>
<path d="M30.5 7L60.5 4V26.5H30.5Z" fill="#9a9896"/>
<path d="M33 7.5L59.5 5V25.2H33Z" fill="#fff"/>
<path d="M31 26.5H61V29H31Z" fill="#2a2624"/>
<path d="M27 23H29V27H27Z" fill="#6a6a70"/>
<path d="M23.5 26H28V32.5H23.5Z" fill="#f08c20"/>
<path d="M20.5 30.5H28V32.5H20.5Z" fill="#e87c18"/>
<path d="M29 28.5L63 28V32.5H29Z" fill="#f28420"/>
<path d="M40 26.5H42V28H40ZM46 26.5H48V28H46ZM52 26.5H54V28H52Z" fill="#3a3a30"/>
<path d="M17 33H66V38.5H17Z" fill="#6c6a66"/><path d="M19 34.5H64V35.5H19Z" fill="#8e8c88"/>
<path d="M0 32H17V40H0Z" fill="#4a2018"/>
<path d="M0 38.5H66V49H0Z" fill="#7a3c28"/>
<defs><pattern id="a52" width="6" height="5" patternUnits="userSpaceOnUse"><circle cx="1.5" cy="1.5" r="1.2" fill="#d8a878"/><circle cx="4.5" cy="3.8" r="1.2" fill="#c23a2a"/><circle cx="4.5" cy="1.2" r="0.9" fill="#3a2018"/><circle cx="1.5" cy="4" r="0.9" fill="#e8c060"/></pattern></defs>
<path d="M0 38H66V49H0Z" fill="url(#a52)"/>
<path d="M0 33H16V39H0Z" fill="url(#a52)" opacity="0.6"/></svg></div>
<div class="th" style="transform:translate(744.2px,376.5px);height:49px;"><svg width="66" height="49" viewBox="0 0 66 49"><rect width="66" height="49" fill="#dedede"/>
<defs><radialGradient id="w53"><stop offset="0" stop-color="#fff"/><stop offset="1" stop-color="#fff" stop-opacity="0"/></radialGradient></defs>
<circle cx="14" cy="16" r="14" fill="url(#w53)"/><circle cx="55" cy="14" r="12" fill="url(#w53)"/>
<path d="M0 0H12L0 16Z" fill="#5c5c5e"/><path d="M0 14L6 8L2 30L0 32Z" fill="#8a8a8c"/>
<path d="M54 0H66V24L60 10Z" fill="#4c4c4e"/><path d="M58 6L62 5L66 20V26Z" fill="#7a7a7c"/>
<path d="M12 0H20L8 20L4 22Z" fill="#bcbcbe"/>
<path d="M26 0H41L44 30H22Z" fill="#a0a0a4"/>
<path d="M31 4H35L36 26H30.5Z" fill="#5c5c62"/>
<path d="M22 8L26 0V30H20Z" fill="#c4c4c6"/>
<path d="M41 0L44 8L50 40H44Z" fill="#8c8a8a"/>
<path d="M44 12L52 20L62 34L66 42V49H46Z" fill="#8f7f70"/>
<path d="M46 16L50 20L54 49H49Z" fill="#a89a8c"/>
<path d="M56 30L64 38V49H57Z" fill="#7a6654"/>
<path d="M53 36H56V40H53Z" fill="#3a5a9a"/><path d="M54 42H57V45H54Z" fill="#d89a20"/>
<path d="M11 27L18 25.5V49H9Z" fill="#948878"/><path d="M12 28L17 27V34H12Z" fill="#c4a868"/>
<path d="M2 38L9 36V49H2Z" fill="#b0a898"/>
<path d="M18 34L22 32V49H17Z" fill="#7c7a78"/>
<path d="M24 25C28 21.5 37 21.5 40.5 24.5L44 39C38 43 27 43 21.5 40Z" fill="#fff"/>
<path d="M21.5 40C27 43.5 38 43.5 44 39L45 48H20Z" fill="#9c8468"/>
<path d="M24 43H26V48H24ZM29 43.5H31.5V48H29ZM35 43.5H37.5V48H35ZM40 42.5H42V48H40Z" fill="#d8ccb4"/>
<path d="M0 47H66V49H0Z" fill="#8a6a6a"/></svg></div>
<div class="th th6" style="transform:translate(602.7px,439.8px);height:33px;"><svg width="66" height="49" viewBox="0 0 66 49"><rect width="66" height="49" fill="#b9e1fb"/>
<circle cx="4" cy="1" r="8.5" fill="#eef6fe"/>
<ellipse cx="40" cy="23" rx="23" ry="18" fill="#e8f2fd"/>
<path d="M2 32C8 24 18 19 28 19.5C40 20 54 24 60 32H2Z" fill="#f2c41c"/>
<path d="M4 32C12 26 20 24 28 25C40 26 50 28 58 32Z" fill="#f0a81c"/>
<path d="M0 29C4 27 8 28 10 32H0Z" fill="#e8b028"/><path d="M56 30C60 28 64 30 66 32H56Z" fill="#e8b028"/>
<g fill="#ead9a6"><path d="M19.5 12H22V29H19.5Z"/><path d="M30 17H32.3V30H30Z"/><path d="M33.5 16H35.7V30H33.5Z"/><path d="M43.5 13H46V30H43.5Z"/><path d="M49.5 16.5H51.7V30H49.5Z"/></g>
<g fill="#f0c050"><ellipse cx="20.7" cy="10.5" rx="1.3" ry="2.2"/><ellipse cx="31.2" cy="15.5" rx="1.1" ry="1.8"/><ellipse cx="34.6" cy="14.5" rx="1.1" ry="1.8"/><ellipse cx="44.7" cy="11.5" rx="1.3" ry="2.2"/><ellipse cx="50.6" cy="15" rx="1.1" ry="1.8"/></g>
<path d="M23 25C25 23.5 29 24 30 26L29 30H23.5Z" fill="#d42c1c"/><path d="M36 26C38 24.5 42 25 43 27L42 30.5H36.5Z" fill="#d42c1c"/>
<path d="M12 28H22V31H12ZM44 28H52V31H44Z" fill="#d8d0c8"/>
<path d="M0 30H66V33H0Z" fill="#a8983c"/><rect x="0" y="26" width="66" height="8" fill="url(#fade6)"/></svg></div>
<div class="th th6" style="transform:translate(673.3px,439.8px);height:33px;"><svg width="66" height="49" viewBox="0 0 66 49"><rect width="66" height="49" fill="#e2309c"/>
<path d="M44 0H66V20Z" fill="#7a1040"/><path d="M50 0H66V10Z" fill="#4a0828"/>
<g fill="#f27cc6" opacity="0.8"><path d="M58 30L0 2V8Z"/><path d="M58 30L14 0H20Z"/><path d="M58 30L30 0H35Z"/><path d="M58 30L0 18V22Z"/><path d="M58 30L41 0H44Z"/><path d="M58 30L62 0H65Z"/></g>
<g fill="#f8b4e0" opacity="0.7"><path d="M58 30L36 0H39Z"/><path d="M58 30L0 12V14Z"/><path d="M58 30L66 8V14Z"/></g>
<path d="M0 27H66V49H0Z" fill="#b82478"/>
<g fill="#121014"><path d="M8 21L9.5 21L10 28L13 27L14.5 19.5L15.5 20L15 28L18 26C19 24 21 24 21.5 26L23 22L24 22.5L23 29L27 28C28 25.5 30 25.5 31 27L36 27L42 26L46 24L47 25L43 28L48 29C49 26 50 24 51 23C50.5 21 51.5 20 53 20C54.5 20 55.5 21.5 55 23C57 24 57.5 28 57 33H8Z"/>
<path d="M0 30L6 28L10 29H60L66 28V49H0Z"/></g>
<path d="M0 29H8V32H0Z" fill="#7a1848"/><rect x="0" y="26" width="66" height="8" fill="url(#fade6)"/></svg></div>
<div class="th th6" style="transform:translate(744.2px,439.8px);height:33px;"><svg width="66" height="49" viewBox="0 0 66 49"><defs><linearGradient id="g63" x1="0" y1="0" x2="1" y2="0"><stop offset="0" stop-color="#9c140e"/><stop offset="0.45" stop-color="#c02812"/><stop offset="0.75" stop-color="#d43c14"/><stop offset="1" stop-color="#c0240f"/></linearGradient></defs><rect width="66" height="49" fill="url(#g63)"/>
<g fill="none" stroke="#e2561a" stroke-width="1.2"><circle cx="42" cy="8" r="3"/><circle cx="52" cy="12" r="4"/><circle cx="48" cy="24" r="3"/><circle cx="58" cy="22" r="4.5"/><circle cx="60" cy="6" r="3.5"/><circle cx="44" cy="3" r="2"/></g>
<g fill="#d8441a"><circle cx="52" cy="12" r="1.8"/><circle cx="58" cy="22" r="2"/><circle cx="48" cy="24" r="1.3"/><circle cx="42" cy="8" r="1.3"/></g>
<circle cx="48" cy="24" r="0.8" fill="#f0a030"/>
<g fill="none" stroke="#c8301a" stroke-width="0.8"><circle cx="8" cy="10" r="3"/><circle cx="14" cy="20" r="2.5"/><circle cx="5" cy="24" r="2"/></g>
<path d="M24.3 10.5C23.8 6.5 27 4 30 4.3C34 4.7 36 8.5 34.8 12C36 12.5 36.5 13.5 36.3 14.5C38 12 42 12 43.5 14.5C45 17 44.5 20 43 21.5C45 24 45.3 27 45 33H18.8C18.5 27 19 22 21.5 19.5C23.5 17.5 24.8 15 24.3 10.5Z" fill="#fff"/>
<path d="M28.3 18.2L34 22C35.2 25 33.5 27.5 32 29.5C31.5 25 30 21 28.3 18.2Z" fill="#c41c14"/>
<path d="M0 28H66V34H0Z" fill="#8a2a14" opacity="0.6"/><rect x="0" y="26" width="66" height="8" fill="url(#fade6)"/></svg></div>
<!--/THUMBS-->


  <!-- scrollbar -->
  <div style="left:816.500px;top:119.500px;width:4.500px;height:353px;background:#1c1c1c;"></div>
  <div style="left:816.500px;top:119.500px;width:4.500px;height:327.500px;background:#fff;"></div>
  <!-- announce -->
  <div style="left:589px;top:502px;width:167px;height:25px;background:#4d4d4d;"></div>
  <div style="left:589px;top:504px;width:167px;text-align:center;color:#e6e6e6;font-size:9.250px;line-height:11px;white-space:nowrap;">Announcing ALL NEW YouCam 8</div>
  <div style="left:644px;top:517px;color:#f6f200;font-family:'DejaVu Sans','Liberation Sans',sans-serif;font-weight:bold;font-size:8.5px;line-height:11px;white-space:nowrap;">Buy now!</div>
  <svg style="left:690px;top:513.500px" width="12" height="12" viewBox="0 0 12 12"><circle cx="6" cy="6" r="4.700" fill="none" stroke="#f6f200" stroke-width="1.5"/><path d="M6 9V3.600M3.600 6L6 3.400L8.400 6" fill="none" stroke="#f6f200" stroke-width="1.4"/></svg>
  <!-- red highlight -->
  <div style="left:733px;top:-3px;width:37px;height:26px;box-sizing:border-box;border-radius:4px;box-shadow:inset 0 0 5px rgba(0,0,0,.55);"></div>
  <div style="left:729px;top:-7px;width:45px;height:34px;box-sizing:border-box;border:1.5px solid #fff;border-radius:9px;"></div>
  <div style="left:730px;top:-6px;width:43px;height:32px;box-sizing:border-box;border:3.500px solid #ec0a14;border-radius:8px;"></div>
  <div style="left:733px;top:-3px;width:37px;height:26px;box-sizing:border-box;border:1.200px solid #f4f4f4;border-radius:5px;"></div>
</div>
</body>
</html>
